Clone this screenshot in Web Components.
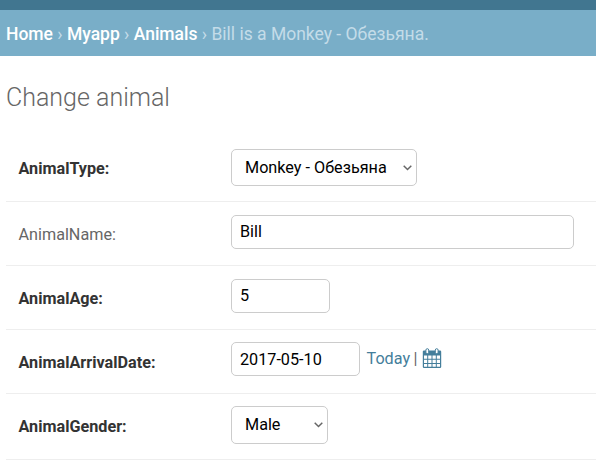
<!DOCTYPE html>
<html lang="en">
<head>
<meta charset="utf-8">
<title>Change animal</title>
<style>
body { margin: 0; background: #fff; color: #333; font-family: Roboto, "Noto Sans", sans-serif; font-size: 16px; }
</style>
</head>
<body>
<admin-breadcrumbs>
  <a>Home</a> › <a>Myapp</a> › <a>Animals</a> › Bill is a Monkey - Обезьяна.
</admin-breadcrumbs>
<admin-form heading="Change animal">
  <form-row label="AnimalType:" required style="--height:70px;--top:17px;--label-top:27px"><select-box style="width:186px;height:37px">Monkey - Обезьяна</select-box></form-row>
  <form-row label="AnimalName:" style="--top:13px"><text-box style="width:343px">Bill</text-box></form-row>
  <form-row label="AnimalAge:" required style="--top:13px"><text-box style="width:99px">5</text-box></form-row>
  <form-row label="AnimalArrivalDate:" required style="--top:12px"><text-box class="date" style="width:129px">2017-05-10</text-box><date-shortcuts></date-shortcuts></form-row>
  <form-row label="AnimalGender:" required style="--height:66px;--top:12px"><select-box style="width:97px;height:38px">Male</select-box></form-row>
</admin-form>
<script>
function define(name, html, setup) {
  const template = document.createElement('template');
  template.innerHTML = html;
  customElements.define(name, class extends HTMLElement {
    constructor() {
      super();
      this.attachShadow({ mode: 'open' }).append(template.content.cloneNode(true));
    }
    connectedCallback() { if (setup) setup(this, this.shadowRoot); }
  });
}

define('admin-breadcrumbs', `
<style>
:host { display: block; box-sizing: border-box; height: 56px; border-top: 10px solid #417690; background: #79aec8; color: #c4dce8; padding: 13px 6px 0; font-size: 17.5px; line-height: 22px; white-space: nowrap; }
::slotted(a) { color: #fff; font-weight: 500; }
</style><slot></slot>`);

define('admin-form', `
<style>
:host { display: block; padding: 26px 0 0 6px; }
h1 { margin: 0 0 18px; font-size: 25px; line-height: 32px; font-weight: 300; color: #666; }
</style><h1></h1><slot></slot>`, (el, root) => {
  root.querySelector('h1').textContent = el.getAttribute('heading');
});

define('form-row', `
<style>
:host { display: grid; grid-template-columns: 212.5px 1fr; box-sizing: border-box; height: var(--height, 64px); border-bottom: 1px solid #eee; padding-left: 12.5px; }
label { padding-top: var(--label-top, 23px); line-height: 20px; font-size: 16.2px; color: #666; white-space: nowrap; }
:host([required]) label { font-weight: 700; color: #333; }
div { display: flex; align-items: flex-start; padding-top: var(--top); }
</style><label></label><div><slot></slot></div>`, (el, root) => {
  root.querySelector('label').textContent = el.getAttribute('label');
});

define('text-box', `
<style>
:host { display: block; box-sizing: border-box; height: 34px; border: 1px solid #ccc; border-radius: 5px; padding: 6px 8px 0; color: #000; font-size: 16.2px; line-height: 20px; white-space: nowrap; }
:host(.date) { padding-top: 7px; }
</style><slot></slot>`);

define('select-box', `
<style>
:host { display: flex; box-sizing: border-box; align-items: center; justify-content: space-between; border: 1px solid #ccc; border-radius: 5px; padding: 0 4px 0 13px; color: #000; font-size: 16.2px; line-height: 20px; white-space: nowrap; }
svg { display: block; flex: none; }
</style><span><slot></slot></span>
<svg width="9" height="6" viewBox="0 0 9 6"><path d="M.7.8 4.5 4.5 8.3.8" fill="none" stroke="#666" stroke-width="1.5"/></svg>`);

define('date-shortcuts', `
<style>
:host { display: flex; align-items: flex-start; margin-left: 6.5px; padding-top: 6px; font-size: 16.2px; line-height: 20px; }
a, .bar { padding-top: 1px; }
a { color: #447e9b; }
.bar { margin: 0 4px 0 3.5px; color: #666; }
</style><a>Today</a><span class="bar">|</span>
<svg width="20" height="21" viewBox="0 0 20 21">
<path d="M2 2.5h16q1.2 0 1.2 1.2v15.1q0 1.2-1.2 1.2H2Q.8 20 .8 18.8V3.7Q.8 2.5 2 2.5z" fill="#447e9b"/>
<path d="M2 7.5h3.2v3.3H2zm4.2 0h3.3v3.3H6.2zm4.3 0h3.3v3.3h-3.3zm4.3 0H18v3.3h-3.2zM2 11.8h3.2V15H2zm4.2 0h3.3V15H6.2zm4.3 0h3.3V15h-3.3zm4.3 0H18V15h-3.2zM2 16h3.2v2.8H2zm4.2 0h3.3v2.8H6.2zm4.3 0h3.3v2.8h-3.3zm4.3 0H18v2.8h-3.2z" fill="#fff"/>
<rect x="3.9" y=".7" width="2.8" height="5" rx="1.4" fill="#fff" stroke="#447e9b"/>
<rect x="13.3" y=".7" width="2.8" height="5" rx="1.4" fill="#fff" stroke="#447e9b"/>
</svg>`);
</script>
</body>
</html>
